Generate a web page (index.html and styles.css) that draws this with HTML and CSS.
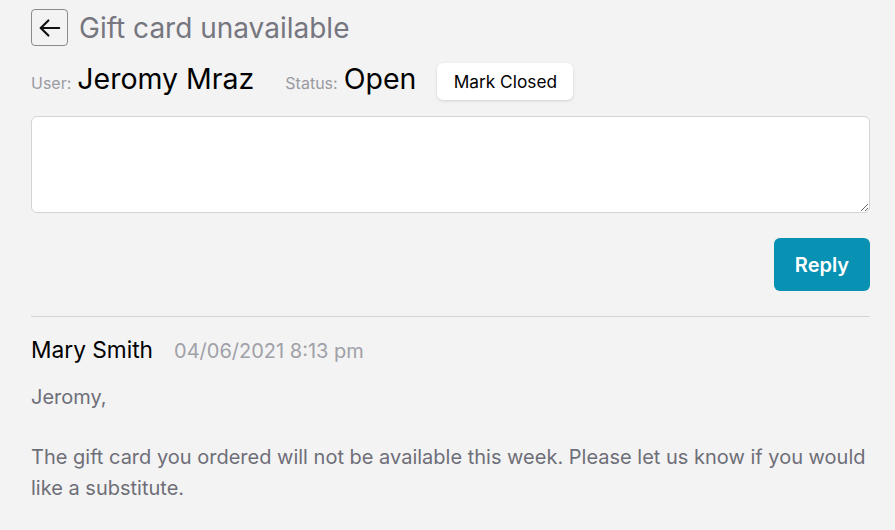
FILE: index.html
```html
<!DOCTYPE html>
<html>
<head>
<meta charset="utf-8">
<link rel="stylesheet" href="styles.css">
</head>
<body>
<div class="page">
  <div class="title-row">
    <button class="back" aria-label="Back">
      <svg width="26" height="26" viewBox="0 0 24 24" fill="none" stroke="#111" stroke-width="2" stroke-linecap="round" stroke-linejoin="round"><path d="M20.5 12H3.5"/><path d="M10.5 19l-7-7 7-7"/></svg>
    </button>
    <h1 class="title">Gift card unavailable</h1>
  </div>
  <div class="meta-row">
    <span class="label">User:</span><span class="value">Jeromy Mraz</span>
    <span class="label status-label">Status:</span><span class="value">Open</span>
    <button class="mark">Mark Closed</button>
  </div>
  <textarea class="reply-box"></textarea>
  <div class="actions">
    <button class="reply">Reply</button>
  </div>
  <hr class="divider">
  <div class="message">
    <div class="msg-head">
      <span class="author">Mary Smith</span>
      <span class="date">04/06/2021 8:13 pm</span>
    </div>
    <p class="body">Jeromy,</p>
    <p class="body">The gift card you ordered will not be available this week. Please let us know if you would like a substitute.</p>
  </div>
</div>
</body>
</html>
```
FILE: styles.css
```css
html, body {
  margin: 0;
  padding: 0;
  background: #f3f3f3;
  font-family: Inter, "Noto Sans", sans-serif;
}
.page {
  padding: 9px 25px 0 31px;
}
.title-row {
  display: flex;
  align-items: center;
  gap: 11px;
  height: 37px;
}
.back {
  width: 37px;
  height: 37px;
  border: 1px solid #8a8a8a;
  border-radius: 4px;
  background: transparent;
  display: flex;
  align-items: center;
  justify-content: center;
  padding: 0;
}
.title {
  margin: 0;
  font-size: 28px;
  font-weight: 400;
  color: #767680;
}
.meta-row {
  display: flex;
  align-items: baseline;
  margin-top: 15px;
  height: 36px;
}
.label {
  font-size: 16px;
  color: #9a9aa2;
  margin-right: 6px;
}
.value {
  font-size: 28.5px;
  color: #000;
}
.status-label {
  margin-left: 31px;
}
.mark {
  align-self: center;
  margin-left: 21px;
  margin-top: 4px;
  height: 37px;
  width: 136px;
  padding: 0;
  background: #fff;
  border: none;
  border-radius: 6px;
  box-shadow: 0 1px 3px rgba(0,0,0,0.15);
  font-family: Inter, sans-serif;
  font-size: 17.3px;
  color: #000;
}
.reply-box {
  display: block;
  box-sizing: border-box;
  width: 100%;
  height: 97px;
  margin-top: 19px;
  background: #fff;
  border: 1px solid #d4d4d4;
  border-radius: 6px;
  resize: vertical;
}
.actions {
  display: flex;
  justify-content: flex-end;
  margin-top: 25px;
}
.reply {
  width: 96px;
  height: 53px;
  background: #0891b2;
  color: #fff;
  border: none;
  border-radius: 6px;
  font-family: Inter, sans-serif;
  font-size: 20px;
  font-weight: 600;
}
.divider {
  border: none;
  border-top: 1px solid #d4d4d4;
  margin: 25px 0 0 0;
}
.message {
  padding-top: 19px;
}
.msg-head {
  display: flex;
  align-items: baseline;
  gap: 21px;
}
.author {
  font-size: 22.7px;
  color: #000;
}
.date {
  font-size: 20px;
  color: #a0a0a8;
}
.body {
  margin: 19px 0 0 0;
  font-size: 20px;
  line-height: 31px;
  color: #6e6e78;
}
.body + .body {
  margin-top: 29px;
}
```
